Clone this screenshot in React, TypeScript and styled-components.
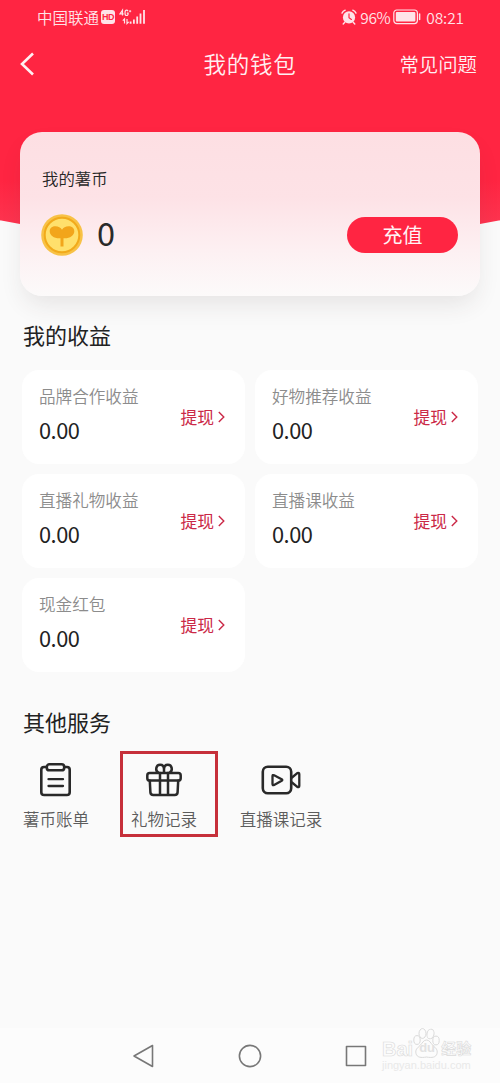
import React from "react";
import styled, { createGlobalStyle } from "styled-components";

const GlobalStyle = createGlobalStyle`
  * { box-sizing: border-box; }
  body {
    margin: 0;
    background: #fafafa;
    font-family: "Noto Sans CJK SC", sans-serif;
    font-weight: 350;
    color: #262626;
  }
`;

const Screen = styled.div`
  display: flex;
  flex-direction: column;
  width: 500px;
  height: 1083px;
  overflow: hidden;
  background: #fafafa;
`;

const Hero = styled.section`
  position: relative;
  isolation: isolate;
  height: 296px;
  &::before {
    content: "";
    position: absolute;
    inset: 0;
    z-index: -1;
    background: linear-gradient(#ff2542 0, #ff2542 180px, #fd3550 226px);
    clip-path: circle(1275px at 50% -1030px);
  }
`;

const StatusBar = styled.div`
  display: flex;
  justify-content: space-between;
  align-items: center;
  height: 34px;
  padding: 0 36px 0 37px;
  color: #ffe3e8;
  font-size: 15.5px;
  line-height: 34px;
`;

const StatusGroup = styled.div`
  display: flex;
  align-items: center;
  svg { display: block; }
`;

const StatusText = styled.span<{ $gap?: number; $track?: number }>`
  margin-left: ${(p) => p.$gap ?? 0}px;
  margin-top: -1px;
  letter-spacing: ${(p) => p.$track ?? 0}px;
`;

const HdBadge = styled.span`
  width: 14px;
  height: 14px;
  margin: 0 4px 0 2px;
  border-radius: 3px;
  background: #ffe3e8;
  color: #ff2845;
  font: 700 9px/14px "Liberation Sans", sans-serif;
  letter-spacing: -0.5px;
  text-align: center;
`;

const NavBar = styled.header`
  display: grid;
  grid-template-columns: 1fr auto 1fr;
  align-items: center;
  height: 60px;
  padding: 0 23px 0 20px;
  color: #fff0f2;
`;

const Title = styled.h1`
  margin: -3px 0 0 3px;
  font-size: 22.5px;
  font-weight: 350;
  line-height: 34px;
  letter-spacing: 0.8px;
`;

const HelpLink = styled.span`
  justify-self: end;
  margin-top: -1px;
  font-size: 19.4px;
  line-height: 30px;
`;

const BalanceCard = styled.div`
  height: 164px;
  margin: 38px 20px 0;
  padding: 33px 22px 0;
  border-radius: 22px;
  background: linear-gradient(#fddfe3 0%, #fde2e6 40%, #fdf0f2 72%, #fcfafa 100%);
  box-shadow: 0 12px 24px -4px rgba(60, 50, 50, 0.11);
`;

const BalanceLabel = styled.div`
  font-size: 16.4px;
  line-height: 26px;
`;

const BalanceRow = styled.div`
  display: flex;
  align-items: center;
  height: 42px;
  margin-top: 23px;
  svg { display: block; margin-left: -1px; }
`;

const BalanceValue = styled.span`
  margin: -6px 0 0 14px;
  font-size: 32.5px;
  font-weight: 400;
  line-height: 42px;
  color: #2a2a2a;
`;

const RechargeButton = styled.button`
  width: 111px;
  height: 36px;
  margin-left: auto;
  padding: 0;
  border: 0;
  border-radius: 18px;
  background: #ff2542;
  color: #fff3f5;
  font: 400 20px/36px "Noto Sans CJK SC", sans-serif;
`;

const SectionTitle = styled.h2<{ $top: number }>`
  margin: ${(p) => p.$top}px 23px 0;
  font-size: 22px;
  font-weight: 400;
  line-height: 32px;
  color: #222;
`;

const EarningsGrid = styled.div`
  display: grid;
  grid-template-columns: 223px 223px;
  grid-auto-rows: 94px;
  gap: 10px;
  margin: 20px 22px 0;
`;

const EarningCard = styled.div`
  display: flex;
  justify-content: space-between;
  align-items: center;
  padding: 0 20px 0 17px;
  border-radius: 17px;
  background: #fff;
`;

const EarningInfo = styled.div`
  padding-bottom: 6px;
`;

const EarningName = styled.div`
  font-size: 16.6px;
  line-height: 26px;
  color: #8c8c8c;
`;

const EarningAmount = styled.div`
  margin-top: 5px;
  font-size: 21.8px;
  font-weight: 400;
  line-height: 32px;
  letter-spacing: -0.5px;
  color: #222;
`;

const Withdraw = styled.span`
  display: flex;
  align-items: center;
  gap: 4px;
  font-size: 16.8px;
  font-weight: 400;
  line-height: 26px;
  color: #cb2947;
`;

const Services = styled.div`
  display: flex;
  margin: 14px 12px 0;
`;

const Service = styled.div<{ $width: number; $marked?: boolean }>`
  display: flex;
  flex-direction: column;
  align-items: center;
  width: ${(p) => p.$width}px;
  height: 86px;
  padding: 6px ${(p) => (p.$marked ? 10 : 0)}px 0 0;
  border: 3px solid ${(p) => (p.$marked ? "#c6303a" : "transparent")};
  svg { display: block; flex: none; }
`;

const ServiceName = styled.span`
  margin-top: 6px;
  font-size: 16.5px;
  line-height: 26px;
  white-space: nowrap;
  color: #5c5c5c;
`;

const ServiceGap = styled.div`
  width: 20px;
`;

const SystemNav = styled.nav`
  position: relative;
  display: flex;
  justify-content: center;
  align-items: center;
  gap: 82px;
  height: 55px;
  margin-top: auto;
  background: #fcfcfc;
  svg { display: block; }
`;

const Watermark = styled.div`
  position: absolute;
  left: 382px;
  top: 0;
  width: 92px;
  color: #fcfcfc;
  font-family: "Liberation Sans", "Noto Sans CJK SC", sans-serif;
`;

const WatermarkBrand = styled.div`
  display: flex;
  align-items: flex-end;
  height: 31px;
  font-size: 20px;
  font-weight: 700;
  line-height: 20px;
  -webkit-text-stroke: 0.6px #dadada;
`;

const WatermarkCn = styled.span`
  margin-left: 1px;
  font-size: 15px;
`;

const WatermarkPaw = styled.div`
  position: relative;
  width: 28px;
  height: 31px;
  margin-left: -1px;
  span {
    position: absolute;
    left: 7px;
    bottom: 4px;
    font-size: 13px;
    line-height: 14px;
    color: #e2e2e2;
    -webkit-text-stroke: 0;
  }
`;

const WatermarkUrl = styled.div`
  font-size: 11px;
  line-height: 13px;
  white-space: nowrap;
  color: #e9e9e9;
`;

const SignalIcon = () => (
  <svg width="27" height="18" viewBox="0 0 27 18" fill="none" stroke="#ffe3e8">
    <path d="M3.5 7.5V2.2L1 5.9h3.6M9 3.2Q8.6 2.2 7.6 2.2 6 2.2 6 4.9q0 2.6 1.6 2.6T9.1 5.2H7.8" strokeWidth="1.2" />
    <path d="M10 3.2h2.2M11.1 2.1v2.2" strokeWidth=".9" />
    <path d="M5.5 15.5v-4.6L3.8 12.6M8 10.9v4.6l1.7-1.7" strokeWidth="1.2" />
    <path d="M11.6 13.5v2.2M14.9 11.5v4.2M18.2 8.5v7.2M21.5 5.5v10.2M25 2v13.7" strokeWidth="1.8" />
  </svg>
);

const AlarmIcon = () => (
  <svg width="16" height="16" viewBox="0 0 16 16" fill="none">
    <circle cx="8" cy="8.4" r="6.1" fill="#ffe3e8" />
    <path d="M1 4.1Q2 2 4.2 1.2M11.8 1.2Q14 2 15 4.1M3.8 13.2l-1.6 1.7M12.2 13.2l1.6 1.7" stroke="#ffe3e8" strokeWidth="1.4" strokeLinecap="round" />
    <path d="M8 4.8v4l2.4 1.6" stroke="#ff2845" strokeWidth="1.2" strokeLinecap="round" />
  </svg>
);

const BatteryIcon = () => (
  <svg width="28" height="16" viewBox="0 0 28 16" fill="none">
    <rect x=".8" y="1" width="23.6" height="13.6" rx="3" stroke="#ffe3e8" strokeWidth="1.2" />
    <rect x="2.8" y="3" width="19.6" height="9.6" rx="1" fill="#ffe3e8" />
    <path d="M26.6 5v5.6" stroke="#ffe3e8" strokeWidth="1.5" strokeLinecap="round" />
  </svg>
);

const BackIcon = () => (
  <svg width="16" height="24" viewBox="0 0 16 24" fill="none">
    <path d="M13 1.5 2 12l11 10.5" stroke="#fff0f2" strokeWidth="2.6" />
  </svg>
);

const CoinIcon = () => (
  <svg width="42" height="42" viewBox="0 0 42 42">
    <circle cx="21" cy="21" r="20.8" fill="#f8c246" />
    <circle cx="21" cy="21" r="17.3" fill="#ffe06c" stroke="#f2aa1b" strokeWidth="2" />
    <path d="M19.500 32.600V24.300C13.500 24.800 8.700 21.800 8.700 17.300c0-3.500 2.600-5.100 5.600-5.100 3.200 0 5.500 1.300 6.700 3.500 1.200-2.200 3.500-3.500 6.700-3.500 3 0 5.600 1.600 5.600 5.100 0 4.500-4.800 7.500-10.800 7V32.600Z" fill="#f2a51b" />
  </svg>
);

const ArrowIcon = () => (
  <svg width="7" height="12" viewBox="0 0 7 12" fill="none">
    <path d="m.8 1 5 5-5 5" stroke="#cb2947" strokeWidth="1.4" />
  </svg>
);

const serviceStroke = { fill: "none", stroke: "#292929", strokeWidth: 2.6, strokeLinejoin: "round", strokeLinecap: "round" } as const;

const BillIcon = () => (
  <svg width="40" height="40" viewBox="0 0 40 40" {...serviceStroke}>
    <path d="M10.500 7H8Q5.300 7 5.300 9.800v22.400Q5.300 35 8.100 35h22.800q2.800 0 2.800-2.800V9.800Q33.700 7 31 7H28.500" />
    <rect x="10.800" y="4.300" width="17.400" height="6" rx="2.600" />
    <path d="M12.500 19.200h14.500M12.500 26h14.500" strokeWidth="2.300" />
  </svg>
);

const GiftIcon = () => (
  <svg width="40" height="40" viewBox="0 0 40 40" {...serviceStroke} strokeWidth={2.5}>
    <rect x="3.300" y="13" width="33.400" height="7.600" rx="2.400" />
    <path d="M5.800 20.800 6.400 32.400Q6.600 35 9.200 35h21.600q2.600 0 2.800-2.600l.6-11.600M16 13v22M24 13v22" />
    <path d="M14.300 12.700c-3.400-2-2.500-8 1.800-8 2.700 0 3.900 2 3.900 4.600v3.200M25.700 12.700c3.400-2 2.500-8-1.800-8-2.700 0-3.900 2-3.900 4.600v3.200" />
  </svg>
);

const VideoIcon = () => (
  <svg width="40" height="40" viewBox="0 0 40 40" {...serviceStroke}>
    <rect x="1.800" y="6.800" width="28.400" height="26.400" rx="5" />
    <path d="M11.500 16.200q0-1.700 1.600-.9l7.600 4q1.200.7 0 1.400l-7.600 4.200q-1.600.9-1.600-.9Z" strokeWidth="2.300" />
    <path d="m31 17.500 5.300-4.400q2-.9 2 1.100v11.600q0 2-2 1.100L31 22.500" strokeWidth="2.300" />
  </svg>
);

const navStroke = { fill: "none", stroke: "#777", strokeWidth: 1.6, strokeLinejoin: "round" } as const;

const earnings = ["品牌合作收益", "好物推荐收益", "直播礼物收益", "直播课收益", "现金红包"];

export default function App() {
  return (
    <>
      <GlobalStyle />
      <Screen>
        <Hero>
          <StatusBar>
            <StatusGroup>
              <StatusText>中国联通</StatusText>
              <HdBadge>HD</HdBadge>
              <SignalIcon />
            </StatusGroup>
            <StatusGroup>
              <AlarmIcon />
              <StatusText $gap={3} $track={-0.4}>96%</StatusText>
              <StatusText $gap={3}><BatteryIcon /></StatusText>
              <StatusText $gap={5} $track={-0.1}>08:21</StatusText>
            </StatusGroup>
          </StatusBar>
          <NavBar>
            <BackIcon />
            <Title>我的钱包</Title>
            <HelpLink>常见问题</HelpLink>
          </NavBar>
          <BalanceCard>
            <BalanceLabel>我的薯币</BalanceLabel>
            <BalanceRow>
              <CoinIcon />
              <BalanceValue>0</BalanceValue>
              <RechargeButton>充值</RechargeButton>
            </BalanceRow>
          </BalanceCard>
        </Hero>

        <SectionTitle $top={22}>我的收益</SectionTitle>
        <EarningsGrid>
          {earnings.map((name) => (
            <EarningCard key={name}>
              <EarningInfo>
                <EarningName>{name}</EarningName>
                <EarningAmount>0.00</EarningAmount>
              </EarningInfo>
              <Withdraw>
                提现
                <ArrowIcon />
              </Withdraw>
            </EarningCard>
          ))}
        </EarningsGrid>

        <SectionTitle $top={33}>其他服务</SectionTitle>
        <Services>
          <Service $width={88}>
            <BillIcon />
            <ServiceName>薯币账单</ServiceName>
          </Service>
          <ServiceGap />
          <Service $width={98} $marked>
            <GiftIcon />
            <ServiceName>礼物记录</ServiceName>
          </Service>
          <Service $width={126}>
            <VideoIcon />
            <ServiceName>直播课记录</ServiceName>
          </Service>
        </Services>

        <SystemNav>
          <svg width="24" height="24" viewBox="0 0 24 24" {...navStroke}>
            <path d="M20.500 1.500v21L2 12Z" />
          </svg>
          <svg width="24" height="24" viewBox="0 0 24 24" {...navStroke}>
            <circle cx="12" cy="12" r="10.600" />
          </svg>
          <svg width="24" height="24" viewBox="0 0 24 24" {...navStroke}>
            <rect x="2.500" y="2.500" width="19" height="19" />
          </svg>
          <Watermark>
            <WatermarkBrand>
              Bai
              <WatermarkPaw>
                <svg width="28" height="31" viewBox="0 0 28 31" fill="#fcfcfc" stroke="#dadada" strokeWidth="1">
                  <ellipse cx="5" cy="12" rx="3.200" ry="4.400" />
                  <ellipse cx="10.500" cy="5.500" rx="3.500" ry="4.900" />
                  <ellipse cx="18.500" cy="6" rx="3.500" ry="4.900" transform="rotate(12 18.500 6)" />
                  <ellipse cx="24" cy="12.500" rx="3.200" ry="4.400" />
                  <path d="M14.500 12c3 0 4 3 6.500 5.500s5 4 4 8-5 4.500-10.500 3.500C9 30 5 29.500 4 25.500s1.500-5.500 4-8 3.500-5.500 6.500-5.500Z" />
                </svg>
                <span>du</span>
              </WatermarkPaw>
              <WatermarkCn>经验</WatermarkCn>
            </WatermarkBrand>
            <WatermarkUrl>jingyan.baidu.com</WatermarkUrl>
          </Watermark>
        </SystemNav>
      </Screen>
    </>
  );
}
